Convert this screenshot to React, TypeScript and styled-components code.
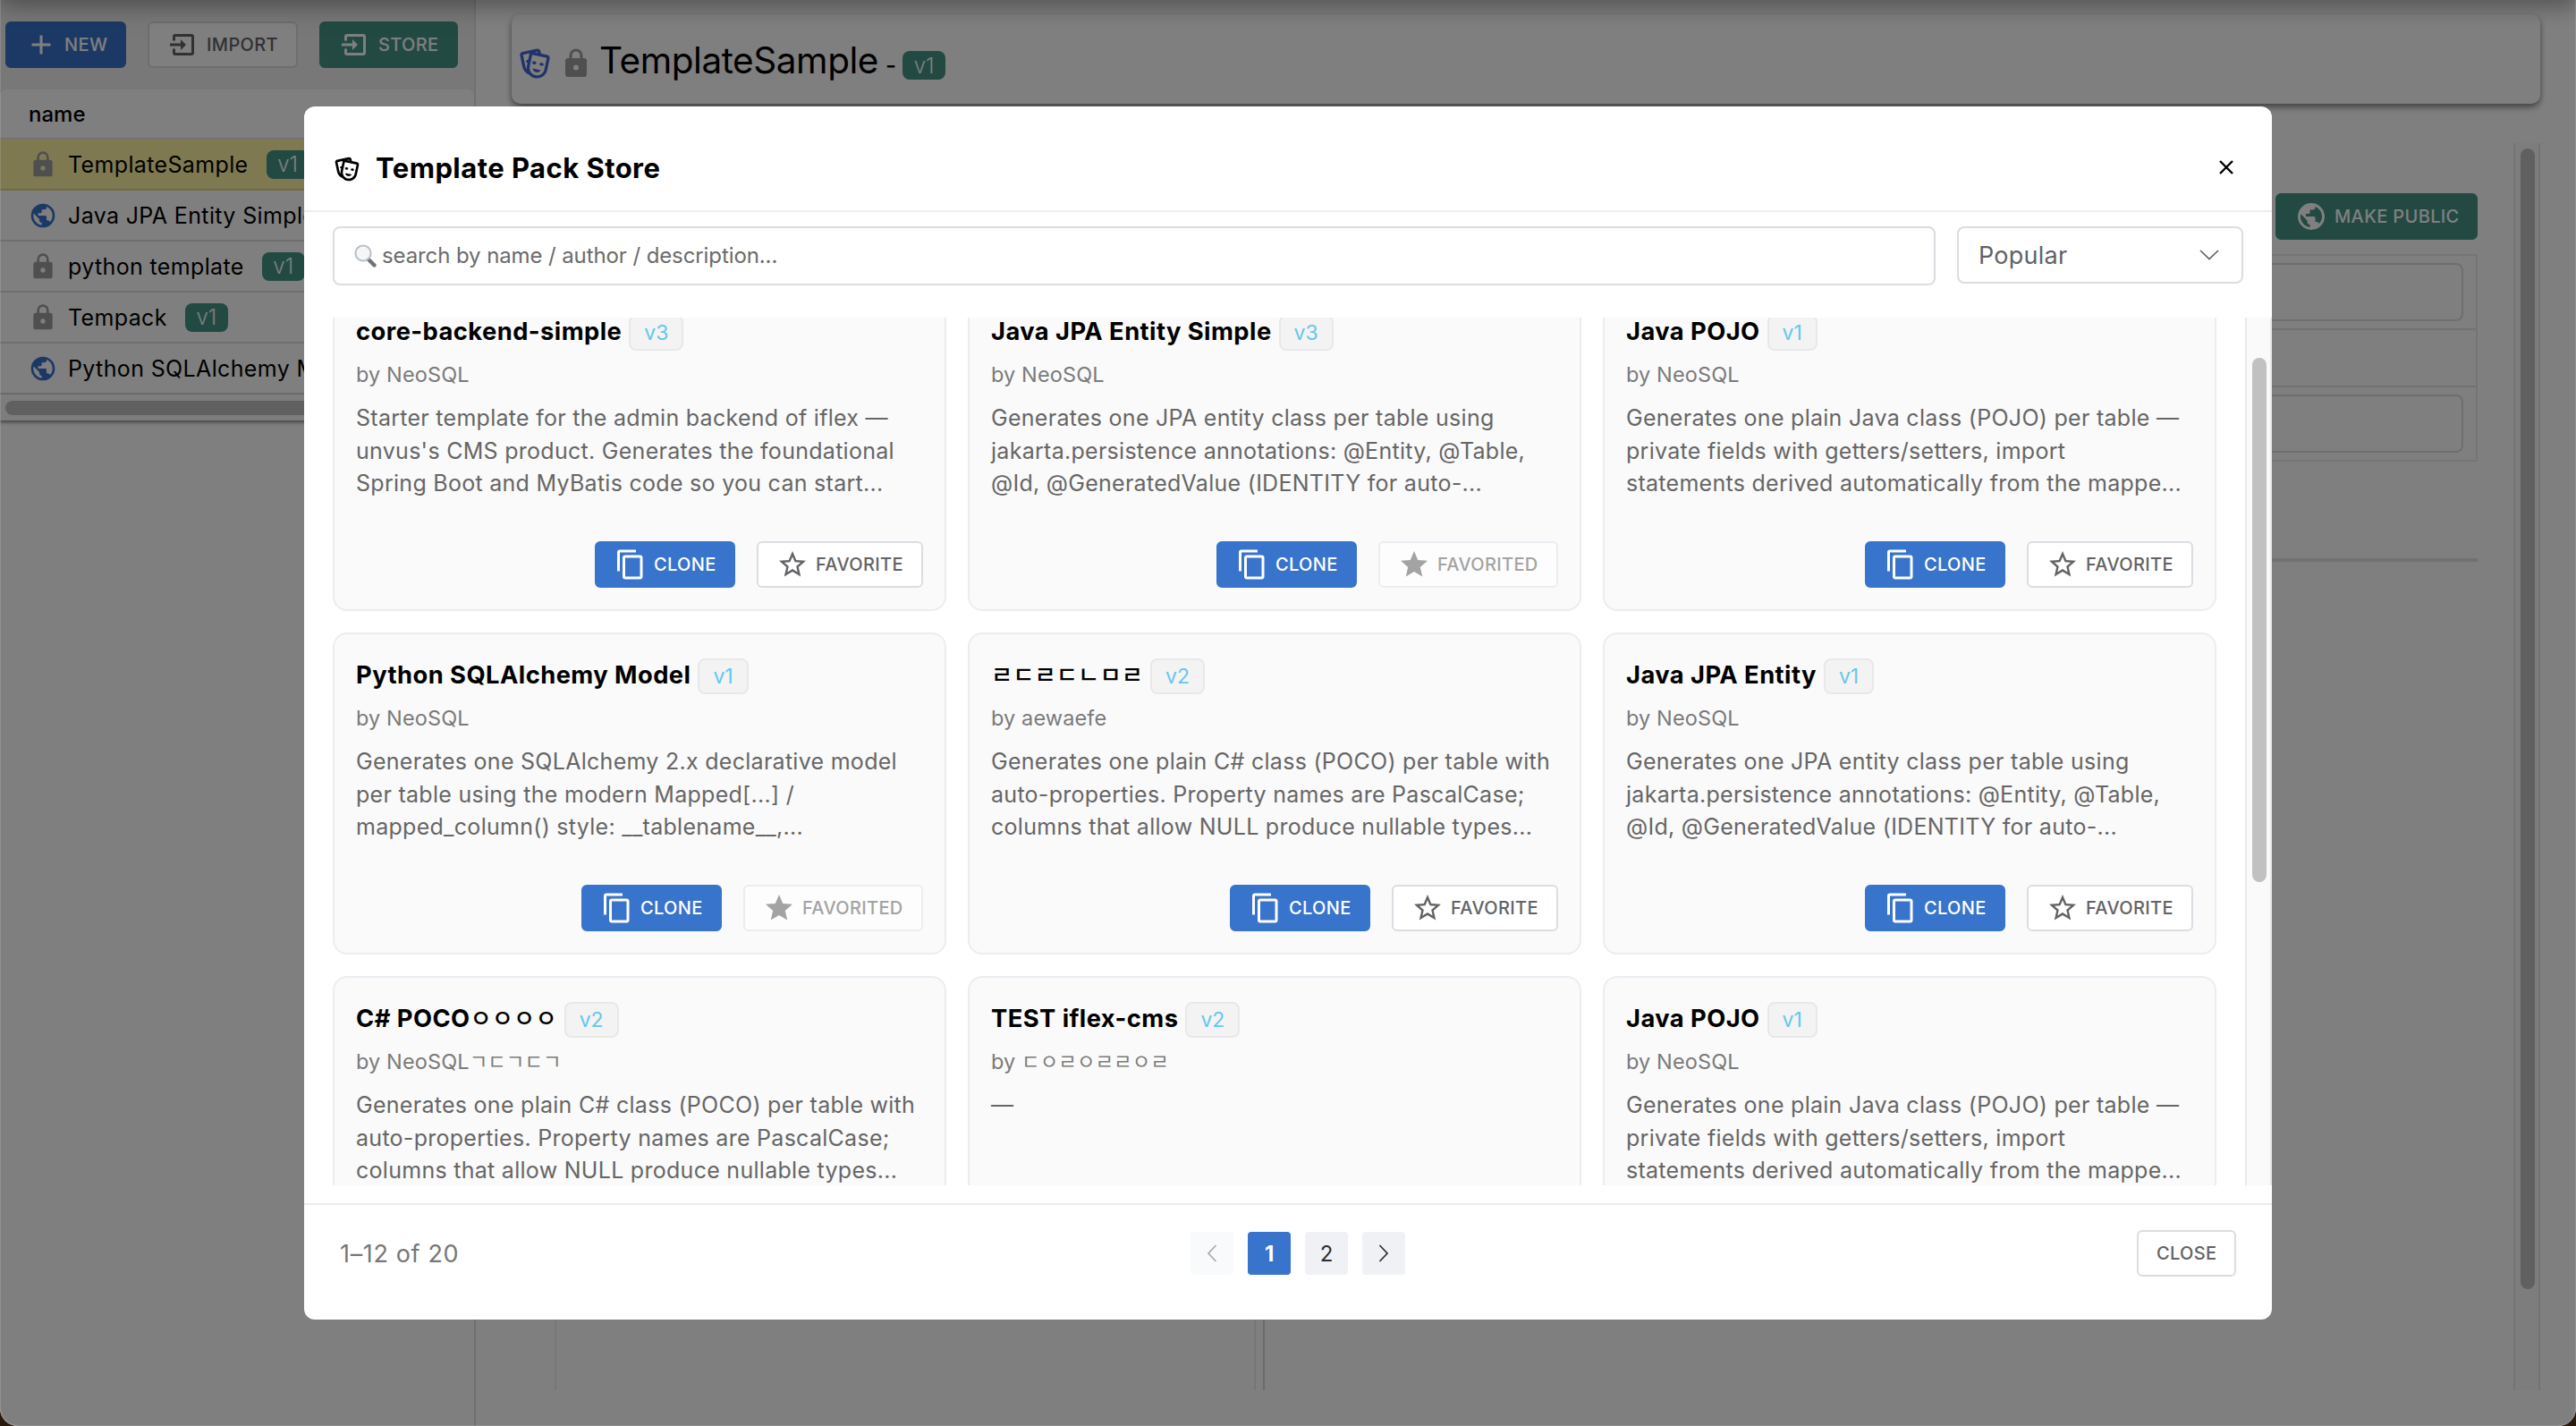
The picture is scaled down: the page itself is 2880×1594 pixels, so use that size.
import React from 'react';
import styled, { createGlobalStyle, css } from 'styled-components';

const FONT = `Inter, "Noto Sans CJK KR", "Liberation Sans", sans-serif`;

const BLUE = '#3873cc';
const TEAL = '#449486';
const LINE = '#ececf2';
const OUTLINE = '#dcdce2';

const GlobalStyle = createGlobalStyle`
  * { box-sizing: border-box; }
  html, body { margin: 0; padding: 0; background: #2a1a0c; }
  body { font-family: ${FONT}; color: #000; overflow: hidden; }
  button, input { font-family: inherit; }
`;

const PATHS = {
  plus: 'M19,13H13V19H11V13H5V11H11V5H13V11H19V13Z',
  import:
    'M14,12L10,8V11H2V13H10V16M20,18V6C20,4.89 19.1,4 18,4H6A2,2 0 0,0 4,6V9H6V6H18V18H6V15H4V18A2,2 0 0,0 6,20H18A2,2 0 0,0 20,18Z',
  lock: 'M12,17A2,2 0 0,0 14,15C14,13.89 13.1,13 12,13A2,2 0 0,0 10,15A2,2 0 0,0 12,17M18,8A2,2 0 0,1 20,10V20A2,2 0 0,1 18,22H6A2,2 0 0,1 4,20V10C4,8.89 4.9,8 6,8H7V6A5,5 0 0,1 12,1A5,5 0 0,1 17,6V8H18M12,3A3,3 0 0,0 9,6V8H15V6A3,3 0 0,0 12,3Z',
  earth:
    'M17.9,17.39C17.64,16.59 16.89,16 16,16H15V13A1,1 0 0,0 14,12H8V10H10A1,1 0 0,0 11,9V7H13A2,2 0 0,0 15,5V4.59C17.93,5.77 20,8.64 20,12C20,14.08 19.2,15.97 17.9,17.39M11,19.93C7.05,19.44 4,16.08 4,12C4,11.38 4.08,10.78 4.21,10.21L9,15V16A2,2 0 0,0 11,18M12,2A10,10 0 0,0 2,12A10,10 0 0,0 12,22A10,10 0 0,0 22,12A10,10 0 0,0 12,2Z',
  copy: 'M19,21H8V7H19M19,5H8A2,2 0 0,0 6,7V21A2,2 0 0,0 8,23H19A2,2 0 0,0 21,21V7A2,2 0 0,0 19,5M16,1H4A2,2 0 0,0 2,3V17H4V3H16V1Z',
  starOutline:
    'M12,15.39L8.24,17.66L9.23,13.38L5.91,10.5L10.29,10.13L12,6.09L13.71,10.13L18.09,10.5L14.77,13.38L15.76,17.66M22,9.24L14.81,8.63L12,2L9.19,8.63L2,9.24L7.45,13.97L5.82,21L12,17.27L18.18,21L16.54,13.97L22,9.24Z',
  star: 'M12,17.27L18.18,21L16.54,13.97L22,9.24L14.81,8.62L12,2L9.19,8.62L2,9.24L7.45,13.97L5.82,21L12,17.27Z',
  masks:
    'M8.11,19.45C5.94,18.65 4.22,16.78 3.71,14.35L2.05,6.54C1.81,5.46 2.5,4.4 3.58,4.17L13.35,2.1L13.38,2.09C14.45,1.88 15.5,2.57 15.72,3.63L16.07,5.3L20.42,6.23H20.45C21.5,6.47 22.18,7.53 21.96,8.59L20.3,16.41C19.5,20.18 15.78,22.6 12,21.79C10.42,21.46 9.08,20.61 8.11,19.45V19.45M20,8.18L10.23,6.1L8.57,13.92V13.95C8,16.63 9.73,19.27 12.42,19.84C15.11,20.41 17.77,18.69 18.34,16L20,8.18M16,16.5C15.37,17.57 14.11,18.16 12.83,17.89C11.56,17.62 10.65,16.57 10.5,15.34L16,16.5M8.47,5.17L4,6.13L5.66,13.94L5.67,13.97C5.82,14.68 6.12,15.32 6.53,15.87C6.43,15.1 6.45,14.3 6.62,13.5L7.05,11.5C6.6,11.42 6.21,11.17 6,10.81C6.06,10.2 6.56,9.66 7.25,9.5C7.33,9.5 7.4,9.5 7.5,9.5L8.28,5.69C8.32,5.5 8.38,5.33 8.47,5.17M15.03,12.23C15.35,11.7 16,11.38 16.7,11.53C17.39,11.67 17.9,12.23 17.96,12.83C17.64,13.36 17,13.68 16.3,13.53C15.61,13.39 15.1,12.84 15.03,12.23M10.15,11.19C10.47,10.66 11.12,10.34 11.81,10.5C12.5,10.64 13,11.2 13.06,11.81C12.74,12.34 12.1,12.66 11.4,12.5C10.71,12.36 10.2,11.81 10.15,11.19M11.97,4.43L13.93,4.85L13.77,4.05L11.97,4.43Z',
};

type IconName = keyof typeof PATHS;

const IconSvg = styled.svg<{ $size: number; $color?: string }>`
  width: ${(p) => p.$size}px;
  height: ${(p) => p.$size}px;
  flex: none;
  display: block;
  fill: ${(p) => p.$color ?? 'currentColor'};
`;

const Icon = ({ name, size = 36, color }: { name: IconName; size?: number; color?: string }) => (
  <IconSvg viewBox="0 0 24 24" $size={size} $color={color}>
    <path d={PATHS[name]} />
  </IconSvg>
);

/* ---------- window and page behind the dialog ---------- */

const Window = styled.div`
  position: relative;
  width: 2880px;
  height: 1594px;
  display: flex;
  overflow: hidden;
  background: #fff;
  border-radius: 0 0 20px 20px;
`;

const AppBarShadow = styled.div`
  position: absolute;
  left: 0;
  right: 0;
  top: -80px;
  height: 80px;
  z-index: 1;
  box-shadow: 0 8px 20px rgba(0, 0, 0, 0.25), 0 4px 40px rgba(0, 0, 0, 0.12);
`;

const Sidebar = styled.aside`
  width: 532px;
  flex: none;
  border-right: 2px solid #e0e0e0;
`;

const SideTop = styled.div`
  background: #f0f0f0;
`;

const Toolbar = styled.div`
  display: flex;
  gap: 24px;
  padding: 24px 0 24px 6px;
`;

type Variant = 'primary' | 'teal' | 'outline' | 'disabled';

const variants = {
  primary: css`background: ${BLUE}; border-color: ${BLUE}; color: #fff;`,
  teal: css`background: ${TEAL}; border-color: ${TEAL}; color: #fff;`,
  outline: css`background: #fff; border-color: ${OUTLINE}; color: #626366;`,
  disabled: css`background: #fdfdfd; border-color: ${LINE}; color: #a3a3a3;`,
};

const Button = styled.button<{ $variant: Variant; $width: number }>`
  width: ${(p) => p.$width}px;
  height: 52px;
  flex: none;
  display: flex;
  align-items: center;
  gap: 8px;
  padding: 0 0 0 20px;
  border: 2px solid;
  border-radius: 6px;
  font-size: 20px;
  font-weight: 500;
  letter-spacing: 0.35px;
  white-space: nowrap;
  ${(p) => variants[p.$variant]}
`;

const ButtonLabel = styled.span`
  padding-bottom: 1px;
`;

const SideTable = styled.div`
  background: #fff;
  border-radius: 8px 8px 0 0;
  overflow: hidden;
`;

const SideHead = styled.div`
  height: 56px;
  padding: 0 32px;
  display: flex;
  align-items: center;
  border-bottom: 2px solid #e2e2e4;
  font-size: 24px;
  font-weight: 500;
`;

const SideRow = styled.div<{ $active?: boolean }>`
  height: 57px;
  padding-left: 32px;
  display: flex;
  align-items: center;
  white-space: nowrap;
  border-bottom: 2px solid ${(p) => (p.$active ? '#e0d58c' : '#dededf')};
  background: ${(p) => (p.$active ? '#fff2a2' : '#fff')};
`;

const SideName = styled.span`
  margin: 0 20px 0 12px;
  font-size: 25px;
  letter-spacing: 0.36px;
`;

const VersionTag = styled.span<{ $drop?: number }>`
  height: 32px;
  width: 48px;
  margin-top: ${(p) => p.$drop ?? 0}px;
  flex: none;
  display: flex;
  align-items: center;
  justify-content: center;
  border-radius: 8px;
  background: ${TEAL};
  color: #fff;
  font-size: 24px;
  font-weight: 300;
`;

const SideScroll = styled.div`
  height: 29px;
  padding: 7px 6px;
  background: #fafafa;
  box-shadow: 0 2px 4px rgba(0, 0, 0, 0.5);
`;

const SideThumb = styled.div`
  height: 16px;
  border-radius: 8px;
  background: #c1c1c1;
`;

const Main = styled.main`
  width: 2308px;
  flex: none;
  padding: 16px 0 40px 40px;
  display: flex;
  flex-direction: column;
`;

const TitleCard = styled.header`
  height: 100px;
  flex: none;
  border-radius: 10px;
  background: #fff;
  display: flex;
  align-items: center;
  padding: 10px 0 0 6px;
  box-shadow: 0 4px 8px -1px rgba(0, 0, 0, 0.4), 0 3px 6px rgba(0, 0, 0, 0.2);
`;

const TitleIcons = styled.div`
  display: flex;
  align-items: center;
  gap: 8px;
`;

const PageTitle = styled.h1`
  margin: -8px 9px 0 8px;
  font-size: 40.5px;
  font-weight: 400;
  letter-spacing: -0.45px;
`;

const Dash = styled.span`
  margin: 2px 7px 0 -1px;
  font-size: 26px;
  font-weight: 500;
`;

const Body = styled.div`
  flex: 1;
  margin: 44px 0 0 48px;
  display: flex;
  justify-content: space-between;
`;

const Content = styled.div`
  width: 2150px;
  display: flex;
  flex-direction: column;
`;

const ContentActions = styled.div`
  display: flex;
  justify-content: flex-end;
  padding-top: 56px;
`;

const FormTable = styled.div`
  margin-top: 16px;
  border: 2px solid #ebebf0;
`;

const FormRow = styled.div<{ $height: number }>`
  height: ${(p) => p.$height}px;
  padding: 8px 14px 0;
  border-bottom: 2px solid #e4e4ea;
  &:last-child { border-bottom: 0; }
`;

const Field = styled.div`
  height: 65px;
  border: 2px solid ${OUTLINE};
  border-radius: 8px;
`;

const Rule = styled.div`
  height: 4px;
  margin-top: 108px;
  background: #e2e2ea;
`;

const Split = styled.div`
  flex: 1;
  display: flex;
  gap: 8px;
`;

const PaneLeft = styled.div`
  width: 784px;
  border: solid #ececec;
  border-width: 0 2px;
`;

const PaneRight = styled.div`
  flex: 1;
  border-left: 2px solid #d8d8d8;
`;

const Track = styled.div<{ $top: number }>`
  width: 30px;
  flex: none;
  padding: ${(p) => p.$top}px 4px 0 6px;
  border: solid #e8e8e8;
  border-width: 0 2px;
  background: #fafafa;
`;

const Thumb = styled.div<{ $height: number }>`
  width: 16px;
  height: ${(p) => p.$height}px;
  border-radius: 8px;
  background: #c1c1c1;
`;

/* ---------- dialog ---------- */

const Overlay = styled.div`
  position: absolute;
  inset: 0;
  z-index: 2;
  padding-top: 119px;
  display: flex;
  justify-content: center;
  align-items: flex-start;
  background: rgba(0, 0, 0, 0.5);
  border-radius: 0 0 20px 20px;
  box-shadow: inset 1px -1px 0 rgba(255, 255, 255, 0.14), inset -1px 0 0 rgba(255, 255, 255, 0.14);
`;

const Dialog = styled.section`
  width: 2200px;
  height: 1356px;
  border-radius: 12px;
  overflow: hidden;
  background: #fff;
  display: flex;
  flex-direction: column;
`;

const DialogHead = styled.header`
  height: 118px;
  flex: none;
  padding: 20px 43px 0 32px;
  display: flex;
  align-items: center;
  border-bottom: 2px solid ${LINE};
`;

const DialogTitle = styled.h2`
  flex: 1;
  margin: 0 0 0 16px;
  font-size: 31px;
  font-weight: 700;
  letter-spacing: 0.45px;
`;

const HeadIcon = styled.div`
  margin-top: 4px;
`;

const CloseX = styled.svg`
  width: 16px;
  height: 16px;
  stroke: #000;
  stroke-width: 2.4;
  fill: none;
`;

const Filters = styled.div`
  flex: none;
  padding: 16px 32px 36px;
  display: flex;
  align-items: flex-start;
  gap: 24px;
`;

const SearchBox = styled.div`
  flex: 1;
  height: 66px;
  padding: 0 0 1px 22px;
  display: flex;
  align-items: center;
  gap: 6px;
  border: 2px solid ${OUTLINE};
  border-radius: 8px;
  color: #6b6b6b;
  font-size: 24px;
  letter-spacing: -0.1px;
`;

const Magnifier = styled.svg`
  width: 25px;
  height: 26px;
`;

const SortSelect = styled.div`
  width: 320px;
  height: 64px;
  padding: 0 26px 0 22px;
  display: flex;
  align-items: center;
  justify-content: space-between;
  border: 2px solid ${OUTLINE};
  border-radius: 8px;
  color: #606266;
  font-size: 27px;
  letter-spacing: 0.25px;
`;

const Chevron = styled.svg<{ $w: number; $h: number }>`
  width: ${(p) => p.$w}px;
  height: ${(p) => p.$h}px;
  stroke: currentColor;
  stroke-width: 1.7;
  fill: none;
  overflow: visible;
`;

const Scroller = styled.div`
  height: 970px;
  flex: none;
  padding-left: 32px;
  display: flex;
  gap: 32px;
  overflow: hidden;
`;

const Grid = styled.div`
  flex: 1;
  height: 1128px;
  margin-top: -32px;
  display: grid;
  grid-template-columns: repeat(3, 686px);
  grid-auto-rows: 360px;
  gap: 24px;
`;

const Card = styled.article`
  border: 2px solid ${LINE};
  border-radius: 16px;
  background: #fafafa;
  padding: 27px 24px 24px;
  display: flex;
  flex-direction: column;
  white-space: nowrap;
`;

const CardHead = styled.div`
  height: 40px;
  display: flex;
  align-items: center;
  gap: 8px;
`;

const CardTitle = styled.h3`
  margin: -3px 0 0;
  font-size: 27.3px;
  font-weight: 700;
  line-height: 40px;
  letter-spacing: 0.46px;
`;

const Hangul = styled.span<{ $size: number }>`
  font-family: 'Noto Sans CJK KR', sans-serif;
  font-size: ${(p) => p.$size}px;
  font-weight: ${(p) => (p.$size > 24 ? 500 : 400)};
  letter-spacing: 0;
  line-height: 0;
`;

const CardVersion = styled.span`
  height: 40px;
  padding: 0 15px;
  display: flex;
  align-items: center;
  border: 2px solid #e8e8e8;
  border-radius: 8px;
  background: #f3f3f3;
  color: #66c7ec;
  font-size: 23px;
  font-weight: 400;
`;

const Author = styled.div`
  margin-top: 9px;
  height: 36px;
  line-height: 36px;
  color: #7a7a7a;
  font-size: 23.5px;
  letter-spacing: 0.12px;
`;

const Description = styled.p`
  margin: 12px 0 0;
  flex: 1;
  color: #666;
  font-size: 25px;
  line-height: 36.5px;
  letter-spacing: 0.28px;
`;

const DescriptionLine = styled.span`
  display: block;
`;

const CardActions = styled.div`
  display: flex;
  justify-content: flex-end;
  gap: 24px;
`;

const DialogFoot = styled.footer`
  margin-top: 20px;
  height: 130px;
  flex: none;
  padding: 28px 40px 0;
  display: flex;
  justify-content: space-between;
  align-items: flex-start;
  border-top: 2px solid ${LINE};
`;

const Range = styled.span`
  line-height: 54px;
  color: #777;
  font-size: 27px;
  letter-spacing: 0.65px;
`;

const Pager = styled.nav`
  display: flex;
  gap: 16px;
  padding-top: 2px;
`;

const PageButton = styled.button<{ $active?: boolean; $faded?: boolean }>`
  width: 48px;
  height: 48px;
  padding: 0;
  display: flex;
  align-items: center;
  justify-content: center;
  border: 0;
  border-radius: 4px;
  font-size: 24px;
  font-weight: ${(p) => (p.$active ? 700 : 400)};
  background: ${(p) => (p.$active ? BLUE : p.$faded ? '#f9fafc' : '#f0f1f5')};
  color: ${(p) => (p.$active ? '#fff' : p.$faded ? '#a8a9ac' : '#2c2d30')};
`;

/* ---------- data ---------- */

const packs = [
  { name: 'TemplateSample', shared: false, active: true },
  { name: 'Java JPA Entity Simple', shared: true },
  { name: 'python template', shared: false },
  { name: 'Tempack', shared: false },
  { name: 'Python SQLAlchemy Model', shared: true },
];

const POCO = [
  'Generates one plain C# class (POCO) per table with',
  'auto-properties. Property names are PascalCase;',
  'columns that allow NULL produce nullable types...',
];
const POJO = [
  'Generates one plain Java class (POJO) per table —',
  'private fields with getters/setters, import',
  'statements derived automatically from the mappe...',
];
const JPA = [
  'Generates one JPA entity class per table using',
  'jakarta.persistence annotations: @Entity, @Table,',
  '@Id, @GeneratedValue (IDENTITY for auto-...',
];

type StoreItem = {
  title: string;
  titleKo?: string;
  version: string;
  author: string;
  authorKo?: string;
  lines: string[];
  favorited?: boolean;
};

const items: StoreItem[] = [
  {
    title: 'core-backend-simple',
    version: 'v3',
    author: 'NeoSQL',
    lines: [
      'Starter template for the admin backend of iflex —',
      "unvus's CMS product. Generates the foundational",
      'Spring Boot and MyBatis code so you can start...',
    ],
  },
  { title: 'Java JPA Entity Simple', version: 'v3', author: 'NeoSQL', lines: JPA, favorited: true },
  { title: 'Java POJO', version: 'v1', author: 'NeoSQL', lines: POJO },
  {
    title: 'Python SQLAlchemy Model',
    version: 'v1',
    author: 'NeoSQL',
    favorited: true,
    lines: [
      'Generates one SQLAlchemy 2.x declarative model',
      'per table using the modern Mapped[...] /',
      'mapped_column() style: __tablename__,...',
    ],
  },
  { title: '', titleKo: 'ㄹㄷㄹㄷㄴㅁㄹ', version: 'v2', author: 'aewaefe', lines: POCO },
  { title: 'Java JPA Entity', version: 'v1', author: 'NeoSQL', lines: JPA },
  { title: 'C# POCO', titleKo: 'ㅇㅇㅇㅇ', version: 'v2', author: 'NeoSQL', authorKo: 'ㄱㄷㄱㄷㄱ', lines: POCO },
  { title: 'TEST iflex-cms', version: 'v2', author: '', authorKo: 'ㄷㅇㄹㅇㄹㄹㅇㄹ', lines: ['—'] },
  { title: 'Java POJO', version: 'v1', author: 'NeoSQL', lines: POJO },
];

const ActionButton = ({
  variant,
  width,
  icon,
  label,
}: {
  variant: Variant;
  width: number;
  icon?: IconName;
  label: string;
}) => (
  <Button $variant={variant} $width={width}>
    {icon && <Icon name={icon} />}
    <ButtonLabel>{label}</ButtonLabel>
  </Button>
);

const StoreCard = ({ item }: { item: StoreItem }) => (
  <Card>
    <CardHead>
      <CardTitle>
        {item.title}
        {item.titleKo && <Hangul $size={26.4}>{item.titleKo}</Hangul>}
      </CardTitle>
      <CardVersion>{item.version}</CardVersion>
    </CardHead>
    <Author>
      by {item.author}
      {item.authorKo && <Hangul $size={22.4}>{item.authorKo}</Hangul>}
    </Author>
    <Description>
      {item.lines.map((line) => (
        <DescriptionLine key={line}>{line}</DescriptionLine>
      ))}
    </Description>
    <CardActions>
      <ActionButton variant="primary" width={157} icon="copy" label="CLONE" />
      {item.favorited ? (
        <ActionButton variant="disabled" width={201} icon="star" label="FAVORITED" />
      ) : (
        <ActionButton variant="outline" width={186} icon="starOutline" label="FAVORITE" />
      )}
    </CardActions>
  </Card>
);

export default function App() {
  return (
    <>
      <GlobalStyle />
      <Window>
        <AppBarShadow />
        <Sidebar>
          <SideTop>
            <Toolbar>
              <ActionButton variant="primary" width={135} icon="plus" label="NEW" />
              <ActionButton variant="outline" width={168} icon="import" label="IMPORT" />
              <ActionButton variant="teal" width={155} icon="import" label="STORE" />
            </Toolbar>
            <SideTable>
              <SideHead>name</SideHead>
              {packs.map((pack) => (
                <SideRow key={pack.name} $active={pack.active}>
                  <Icon
                    name={pack.shared ? 'earth' : 'lock'}
                    size={32}
                    color={pack.shared ? BLUE : '#9e9e9e'}
                  />
                  <SideName>{pack.name}</SideName>
                  <VersionTag>v1</VersionTag>
                </SideRow>
              ))}
            </SideTable>
          </SideTop>
          <SideScroll>
            <SideThumb />
          </SideScroll>
        </Sidebar>

        <Main>
          <TitleCard>
            <TitleIcons>
              <Icon name="masks" size={40} color="#4266d4" />
              <Icon name="lock" color="#9e9e9e" />
            </TitleIcons>
            <PageTitle>TemplateSample</PageTitle>
            <Dash>-</Dash>
            <VersionTag $drop={4}>v1</VersionTag>
          </TitleCard>
          <Body>
            <Content>
              <ContentActions>
                <ActionButton variant="teal" width={226} icon="earth" label="MAKE PUBLIC" />
              </ContentActions>
              <FormTable>
                <FormRow $height={83}>
                  <Field />
                </FormRow>
                <FormRow $height={64} />
                <FormRow $height={81}>
                  <Field />
                </FormRow>
              </FormTable>
              <Rule />
              <Split>
                <PaneLeft />
                <PaneRight />
              </Split>
            </Content>
            <Track $top={6}>
              <Thumb $height={1275} />
            </Track>
          </Body>
        </Main>

        <Overlay>
          <Dialog>
            <DialogHead>
              <HeadIcon>
                <Icon name="masks" size={32} />
              </HeadIcon>
              <DialogTitle>Template Pack Store</DialogTitle>
              <CloseX viewBox="0 0 16 16">
                <path d="M1 1L15 15M15 1L1 15" />
              </CloseX>
            </DialogHead>
            <Filters>
              <SearchBox>
                <Magnifier viewBox="0 0 25 26">
                  <path d="M15.5 16.5L22.5 23.5" stroke="#6f7276" strokeWidth="4.4" strokeLinecap="round" />
                  <circle cx="10" cy="10" r="8.6" fill="#f4f6f7" stroke="#b9c0c6" strokeWidth="2" />
                </Magnifier>
                search by name / author / description...
              </SearchBox>
              <SortSelect>
                Popular
                <Chevron $w={20} $h={10} viewBox="0 0 20 10">
                  <path d="M0 0L10 9.5L20 0" />
                </Chevron>
              </SortSelect>
            </Filters>
            <Scroller>
              <Grid>
                {items.map((item, i) => (
                  <StoreCard key={i} item={item} />
                ))}
              </Grid>
              <Track $top={45}>
                <Thumb $height={586} />
              </Track>
            </Scroller>
            <DialogFoot>
              <Range>1–12 of 20</Range>
              <Pager>
                <PageButton $faded>
                  <Chevron $w={10} $h={18} viewBox="0 0 10 18">
                    <path d="M9.5 0L1 9L9.5 18" />
                  </Chevron>
                </PageButton>
                <PageButton $active>1</PageButton>
                <PageButton>2</PageButton>
                <PageButton>
                  <Chevron $w={10} $h={18} viewBox="0 0 10 18">
                    <path d="M0.5 0L9 9L0.5 18" />
                  </Chevron>
                </PageButton>
              </Pager>
              <ActionButton variant="outline" width={111} label="CLOSE" />
            </DialogFoot>
          </Dialog>
        </Overlay>
      </Window>
    </>
  );
}
